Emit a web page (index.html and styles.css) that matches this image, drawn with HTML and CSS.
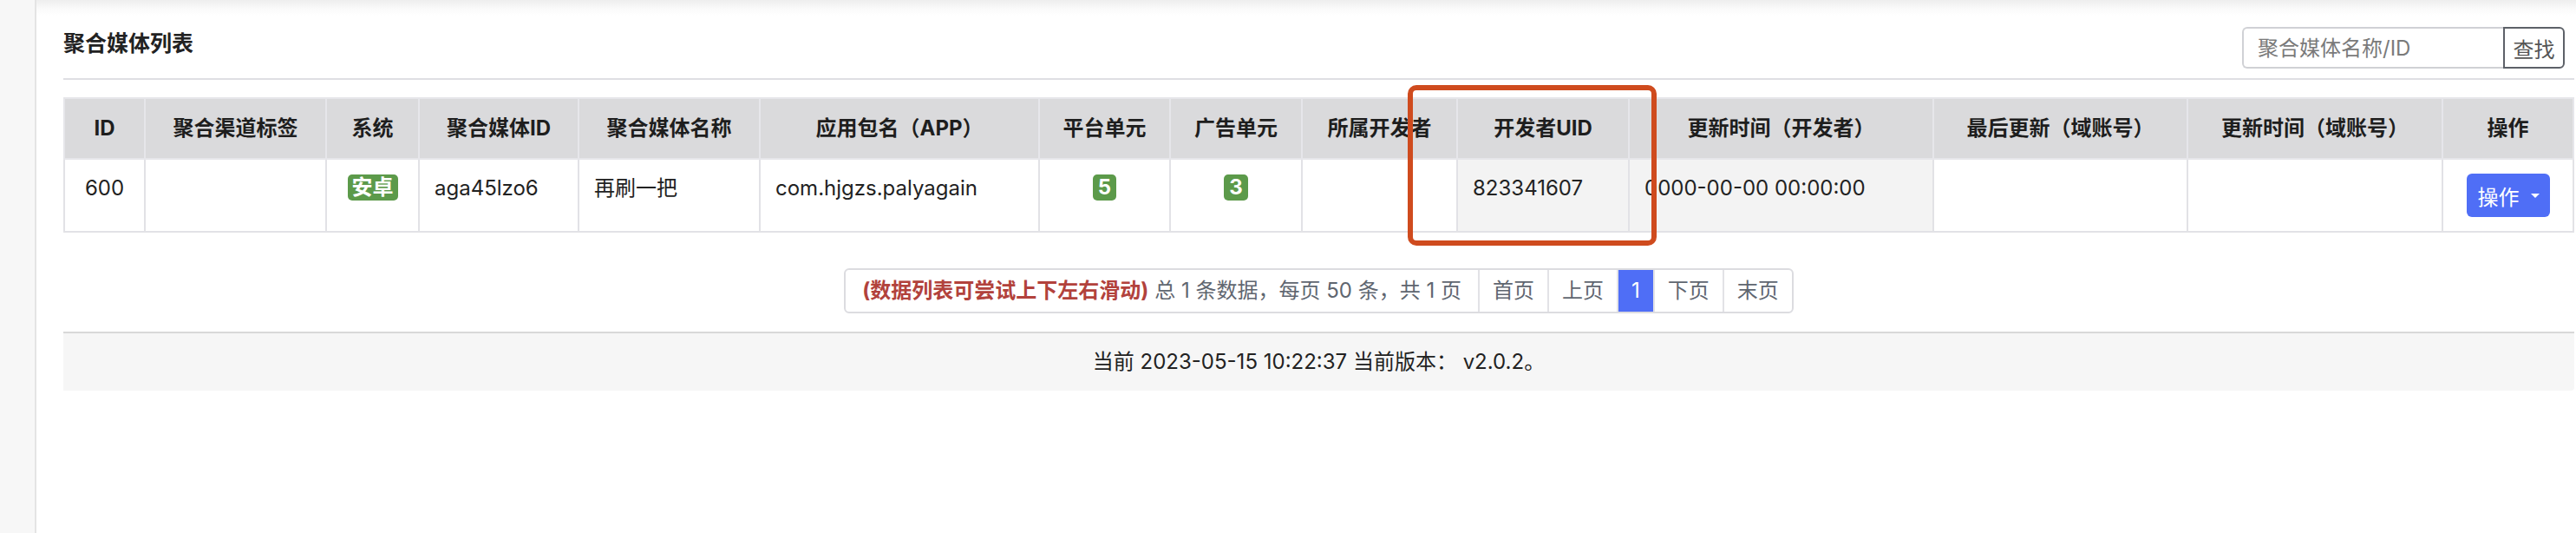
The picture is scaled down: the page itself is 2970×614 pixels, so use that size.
FILE: index.html
```html
<!DOCTYPE html>
<html lang="zh-CN">
<head>
<meta charset="utf-8">
<title>聚合媒体列表</title>
<link rel="stylesheet" href="styles.css">
</head>
<body>
<div class="layout">
  <aside class="side"></aside>
  <main class="main">
    <div class="topbar">
      <h2 class="title">聚合媒体列表</h2>
      <form class="search">
        <input class="search-input" type="text" placeholder="聚合媒体名称/ID">
        <button class="search-btn" type="button">查找</button>
      </form>
    </div>

    <table class="grid">
      <colgroup>
        <col class="w-id"><col class="w-tag"><col class="w-sys"><col class="w-mid"><col class="w-name">
        <col class="w-pkg"><col class="w-plat"><col class="w-ad"><col class="w-dev"><col class="w-uid">
        <col class="w-t1"><col class="w-last"><col class="w-t2"><col class="w-op">
      </colgroup>
      <thead>
        <tr>
          <th>ID</th><th>聚合渠道标签</th><th>系统</th><th>聚合媒体ID</th><th>聚合媒体名称</th>
          <th>应用包名（APP）</th><th>平台单元</th><th>广告单元</th><th>所属开发者</th><th>开发者UID</th>
          <th>更新时间（开发者）</th><th>最后更新（域账号）</th><th>更新时间（域账号）</th><th>操作</th>
        </tr>
      </thead>
      <tbody>
        <tr>
          <td class="center">600</td>
          <td></td>
          <td class="center"><span class="badge">安卓</span></td>
          <td>aga45lzo6</td>
          <td>再刷一把</td>
          <td>com.hjgzs.palyagain</td>
          <td class="center"><span class="badge num">5</span></td>
          <td class="center"><span class="badge num">3</span></td>
          <td></td>
          <td class="shade">823341607</td>
          <td class="shade">0000-00-00 00:00:00</td>
          <td></td>
          <td></td>
          <td class="center"><button class="op-btn" type="button">操作<span class="caret"></span></button></td>
        </tr>
      </tbody>
    </table>

    <div class="pager-row">
      <div class="pager">
        <span class="pager-info"><b class="hint">(数据列表可尝试上下左右滑动)</b> 总 1 条数据，每页 50 条，共 1 页</span>
        <span class="pager-item">首页</span>
        <span class="pager-item">上页</span>
        <span class="pager-item active">1</span>
        <span class="pager-item">下页</span>
        <span class="pager-item">末页</span>
      </div>
    </div>

    <footer class="foot">当前 2023-05-15 10:22:37 当前版本： v2.0.2。</footer>
  </main>
</div>
<div class="annot"></div>
</body>
</html>
```

FILE: styles.css
```css
* { box-sizing: border-box; }

html, body {
  margin: 0;
  padding: 0;
  background: #fff;
}

body {
  font-family: Inter, "Noto Sans CJK SC", sans-serif;
  font-size: 24px;
  color: #222;
  position: relative;
}

.layout {
  display: flex;
  min-height: 614px;
}

.side {
  width: 42px;
  flex: 0 0 42px;
  background: #f7f7f7;
  border-right: 2px solid #e4e4e4;
}

.main {
  flex: 1;
  padding: 0 4px 0 31px;
  background: linear-gradient(to bottom, #eeeeee 0, #fafafa 10px, #ffffff 18px) no-repeat;
}

/* ---------- title bar ---------- */
.topbar {
  display: flex;
  justify-content: space-between;
  align-items: flex-start;
  padding: 31px 0 11px;
  border-bottom: 2px solid #dfdfe3;
}

.title {
  margin: 1px 0 0;
  font-size: 25px;
  line-height: 36px;
  font-weight: 600;
  color: #222;
}

.search {
  display: flex;
  margin: 0 11px 0 0;
}

.search-input {
  width: 301px;
  height: 48px;
  border: 2px solid #d0d1d5;
  border-right: none;
  border-radius: 6px 0 0 6px;
  padding: 0 16px;
  font-family: Inter, "Noto Sans CJK SC", sans-serif;
  font-size: 24px;
  color: #333;
  outline: none;
}

.search-input::placeholder { color: #7a7a7a; }

.search-btn {
  width: 71px;
  height: 48px;
  border: 2px solid #5d6168;
  border-radius: 0 6px 6px 0;
  background: #fff;
  color: #555;
  font-family: Inter, "Noto Sans CJK SC", sans-serif;
  font-size: 24px;
  padding: 0;
}

/* ---------- table ---------- */
.grid {
  margin-top: 20px;
  width: 2893px;
  border-collapse: collapse;
  table-layout: fixed;
  border: 2px solid #dedee2;
}

.w-id { width: 93px; }
.w-tag { width: 209px; }
.w-sys { width: 107px; }
.w-mid { width: 184px; }
.w-name { width: 209px; }
.w-pkg { width: 322px; }
.w-plat { width: 151px; }
.w-ad { width: 152px; }
.w-dev { width: 179px; }
.w-uid { width: 198px; }
.w-t1 { width: 351px; }
.w-last { width: 293px; }
.w-t2 { width: 294px; }
.w-op { width: 151px; }

.grid th {
  background: #dadadc;
  font-weight: 700;
  color: #1e1e1e;
  text-align: center;
  line-height: 34px;
  padding: 17px 4px;
  border: 2px solid #e6e6ea;
  white-space: nowrap;
}

.grid td {
  line-height: 34px;
  padding: 16px 17px;
  border: 2px solid #e2e2e6;
  vertical-align: top;
  white-space: nowrap;
  color: #222;
}

.grid td.center { text-align: center; padding-left: 4px; padding-right: 4px; }
.grid td.shade { background: #f3f3f3; }

.badge {
  display: inline-block;
  background: #5c9a4a;
  color: #fff;
  font-weight: 700;
  font-size: 24px;
  line-height: 24px;
  padding: 3px 5px;
  border-radius: 5px;
  vertical-align: 1px;
}

.badge.num { padding: 3px 6px; }

.op-btn {
  display: inline-flex;
  align-items: center;
  height: 50px;
  vertical-align: top;
  padding: 0 12px 0 13px;
  border: none;
  border-radius: 6px;
  background: #4f6ef6;
  color: #fff;
  font-family: Inter, "Noto Sans CJK SC", sans-serif;
  font-size: 24px;
}

.caret {
  display: inline-block;
  width: 0;
  height: 0;
  margin-left: 13px;
  border-top: 5px solid #fff;
  border-left: 5px solid transparent;
  border-right: 5px solid transparent;
}

/* ---------- pager ---------- */
.pager-row {
  display: flex;
  justify-content: center;
  margin-top: 41px;
}

.pager {
  display: flex;
  height: 52px;
  border: 2px solid #dcdce0;
  border-radius: 6px;
  line-height: 48px;
  color: #5f6670;
  overflow: hidden;
}

.pager-info {
  padding: 0 19px;
  white-space: nowrap;
}

.hint {
  color: #b2423c;
  font-weight: 700;
}

.pager-item {
  border-left: 2px solid #e2e2e6;
  padding: 0 15px;
  color: #5f6670;
}

.pager-item.active {
  background: #4f6ef6;
  color: #fff;
}

/* ---------- footer ---------- */
.foot {
  margin-top: 21px;
  height: 68px;
  border-top: 2px solid #d8d8d8;
  background: #f6f6f6;
  border-radius: 0 0 4px 0;
  text-align: center;
  line-height: 66px;
  color: #222;
}

/* ---------- annotation overlay ---------- */
.annot {
  position: absolute;
  left: 1623px;
  top: 98px;
  width: 287px;
  height: 185px;
  border: 6px solid #cf4b1e;
  border-radius: 10px;
  pointer-events: none;
}
```
